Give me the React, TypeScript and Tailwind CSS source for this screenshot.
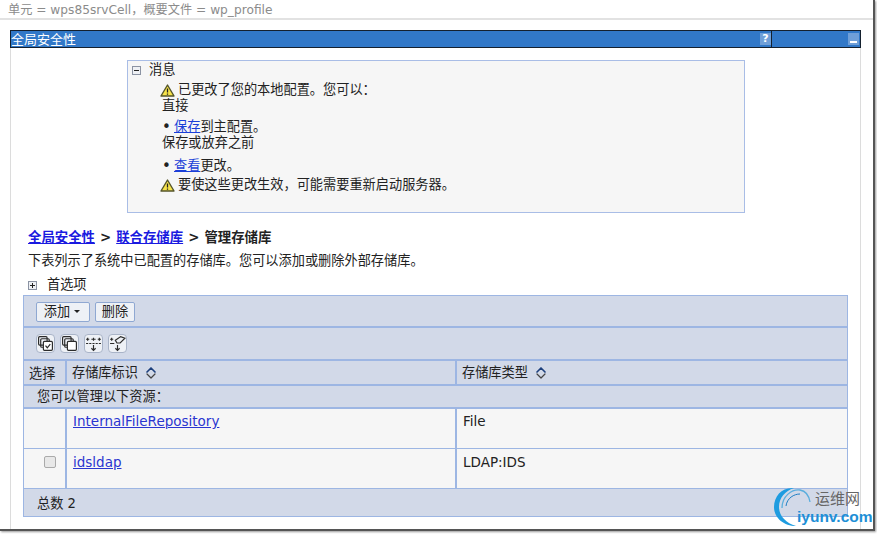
import { ChevronUp, ChevronDown } from "lucide-react";

const font = "font-['DejaVu_Sans','Noto_Sans_CJK_SC',sans-serif]";

function Warn() {
  return (
    <svg width="15" height="13" viewBox="0 0 15 13" className="shrink-0 -ml-[2px]">
      <path d="M7.5 1 L14 12 H1 Z" fill="#f7e34a" stroke="#55552a" strokeWidth="1.4" strokeLinejoin="round" />
      <path d="M7.5 4.5 V8.5 M7.5 9.6 V10.8" stroke="#222" strokeWidth="1.3" />
    </svg>
  );
}

function TreeBox({ plus }: { plus?: boolean }) {
  return (
    <svg width="9" height="9" viewBox="0 0 9 9" className="shrink-0">
      <rect x="0.5" y="0.5" width="8" height="8" fill="#eef0f4" stroke="#8b93a3" />
      <path d={plus ? "M2 4.5 H7 M4.5 2 V7" : "M2 4.5 H7"} stroke="#222" strokeWidth="1" />
    </svg>
  );
}

function Sort() {
  return (
    <span className="flex flex-col ml-[5px] -space-y-[10px]">
      <ChevronUp size={16} strokeWidth={2.5} className="text-[#1c3f7c]" />
      <ChevronDown size={16} strokeWidth={1.8} className="text-[#444]" />
    </span>
  );
}

function ToolIcon({ children }: { children: React.ReactNode }) {
  return (
    <span className="w-[19px] h-[19px] rounded-[4px] border border-[#a9b4c8] bg-[#eef1f6] flex items-center justify-center">
      <svg width="17" height="17" viewBox="0 0 16 16" fill="none" stroke="#2b2b2b" strokeWidth="1.1">
        {children}
      </svg>
    </span>
  );
}

export default function App() {
  return (
    <div className={`w-[877px] h-[534px] bg-white overflow-hidden relative text-[13.2px] leading-[16px] text-[#222] ${font}`}>
      <div className="w-[875px] h-[531px] border-r-2 border-b-2 border-[#555] shadow-[1px_1px_2px_#999]">
        <div className="h-[20px] pl-[8px] pt-[2px] border-b-2 border-[#e2e2e2] text-[12.2px] leading-[16px] text-[#8b8b8b]">
          单元 = wps85srvCell，概要文件 = wp_profile
        </div>

        <div className="ml-[10px] mt-[10px] w-[851px] h-[499px] border-x border-[#dcdcdc]">
          <div className="-mx-px h-[18px] flex border border-[#14202e] bg-[#3178c8] text-white text-[13px] leading-[17px]">
            <div className="flex-1 flex justify-between border-r border-[#14202e]">
              <span>全局安全性</span>
              <span className="w-[11px] h-[12px] mt-[2px] bg-[#6f9fd8] text-[11px] leading-[12px] font-bold text-center">?</span>
            </div>
            <div className="w-[88px] flex justify-end pr-[1px]">
              <span className="w-[11px] h-[12px] mt-[2px] bg-[#6f9fd8] flex items-end justify-center pb-[2px]">
                <span className="w-[7px] h-[2px] bg-white" />
              </span>
            </div>
          </div>

          <div className="ml-[116px] mt-[12px] w-[618px] h-[153px] border border-[#a9bde6] bg-[#f6f6f6] pl-[4px] pt-[1px]">
            <div className="flex items-center gap-[8px] h-[16px]">
              <TreeBox />
              <span>消息</span>
            </div>
            <div className="ml-[30px] mt-[4px]">
              <div className="flex items-center h-[16px] gap-[3px]"><Warn />已更改了您的本地配置。您可以：</div>
              <div className="h-[16px]">直接</div>
              <div className="flex items-center mt-[5px] h-[16px]">
                <span className="w-[12px] text-[15px]">•</span>
                <a className="text-[#1a3fd8] underline">保存</a>到主配置。
              </div>
              <div className="h-[16px]">保存或放弃之前</div>
              <div className="flex items-center mt-[7px] h-[16px]">
                <span className="w-[12px] text-[15px]">•</span>
                <a className="text-[#1a3fd8] underline">查看</a>更改。
              </div>
              <div className="flex items-center h-[16px] mt-[3px] gap-[3px]"><Warn />要使这些更改生效，可能需要重新启动服务器。</div>
            </div>
          </div>

          <div className="ml-[17px] mt-[16px] h-[18px] leading-[18px] font-bold text-[13.4px] flex gap-[5px]">
            <a className="text-[#1a1ae0] underline">全局安全性</a>
            <span>&gt;</span>
            <a className="text-[#1a1ae0] underline">联合存储库</a>
            <span>&gt;</span>
            <span>管理存储库</span>
          </div>
          <div className="ml-[17px] mt-[5px] h-[18px] leading-[18px]">下表列示了系统中已配置的存储库。您可以添加或删除外部存储库。</div>
          <div className="ml-[17px] mt-[7px] h-[16px] flex items-center gap-[10px]">
            <TreeBox plus />
            <span>首选项</span>
          </div>

          <div className="ml-[12px] mt-[2px] w-[825px] border border-[#9db6e3] bg-[#d2d9e8]">
            <div className="h-[32px] flex items-center gap-[5px] pl-[12px] pt-[1px] border-b-2 border-[#9db6e3]">
              <span className="w-[54px] h-[20px] flex items-center justify-center gap-[4px] pr-[2px] bg-[#eef1f6] border border-[#8fa8d2] rounded-[2px]">
                添加
                <span className="w-0 h-0 border-x-[3px] border-x-transparent border-t-[3px] border-t-[#222]" />
              </span>
              <span className="w-[40px] h-[20px] flex items-center justify-center bg-[#eef1f6] border border-[#8fa8d2] rounded-[2px]">删除</span>
            </div>
            <div className="h-[33px] flex items-center gap-[5px] pl-[12px] border-b-2 border-[#9db6e3]">
              <ToolIcon>
                <rect x="1.5" y="1.5" width="8" height="8" rx="1" />
                <rect x="3.5" y="3.5" width="8" height="8" rx="1" />
                <rect x="6" y="6" width="8.5" height="8.5" rx="1" fill="#fff" />
                <path d="M8 10 L9.7 12 L12.5 8.5" />
              </ToolIcon>
              <ToolIcon>
                <rect x="1.5" y="1.5" width="8" height="8" rx="1" />
                <rect x="3.5" y="3.5" width="8" height="8" rx="1" />
                <rect x="6" y="6" width="8.5" height="8.5" rx="1" fill="#fff" />
              </ToolIcon>
              <ToolIcon>
                <path d="M1 4 H4 M2.5 2.5 V5.5 M6 4 H10 M8 2.5 V5.5 M12 4 H15 M13.5 2.5 V5.5" />
                <path d="M1 8 H15" strokeDasharray="2 1" />
                <path d="M8 9.5 V14.5 M6 12.5 L8 14.5 L10 12.5" />
              </ToolIcon>
              <ToolIcon>
                <path d="M1 4 H4 M2.5 2.5 V5.5 M1 8 H5" />
                <path d="M6 5 L11 1.5 L15 3 L10.5 7.5 H7.5 Z" />
                <path d="M8 9.5 V14.5 M6 12.5 L8 14.5 L10 12.5" />
              </ToolIcon>
            </div>
            <div className="h-[25px] flex items-center border-b-2 border-[#9db6e3]">
              <div className="w-[43px] h-full border-r-2 border-[#9db6e3] pl-[5px] leading-[25px]">选择</div>
              <div className="w-[390px] h-full border-r-2 border-[#9db6e3] pl-[5px] pt-[1px] flex items-center">存储库标识<Sort /></div>
              <div className="flex-1 h-full pl-[5px] pt-[1px] flex items-center">存储库类型<Sort /></div>
            </div>
            <div className="h-[23px] pl-[13px] leading-[21px] border-b-2 border-[#9db6e3]">您可以管理以下资源：</div>
            <div className="h-[40px] flex bg-[#f6f6f6] border-b border-[#9db6e3] text-[13.5px] leading-[18px]">
              <div className="w-[43px] border-r-2 border-[#9db6e3]" />
              <div className="w-[390px] border-r-2 border-[#9db6e3] pl-[6px] pt-[3px]">
                <a className="text-[#2a35d0] underline">InternalFileRepository</a>
              </div>
              <div className="flex-1 pl-[6px] pt-[3px]">File</div>
            </div>
            <div className="h-[40px] flex bg-[#f6f6f6] border-b border-[#9db6e3] text-[13.5px] leading-[18px]">
              <div className="w-[43px] border-r-2 border-[#9db6e3] pl-[20px] pt-[7px]">
                <span className="block w-[12px] h-[12px] rounded-[2px] border border-[#aaa] bg-[#e8e8e8]" />
              </div>
              <div className="w-[390px] border-r-2 border-[#9db6e3] pl-[6px] pt-[4px]">
                <a className="text-[#2a35d0] underline">idsldap</a>
              </div>
              <div className="flex-1 pl-[6px] pt-[4px]">LDAP:IDS</div>
            </div>
            <div className="h-[27px] pl-[13px] leading-[29px]">总数 2</div>
          </div>
        </div>
      </div>

      {/* watermark */}
      <div className="absolute left-[772px] top-[486px] w-[105px] h-[46px]">
        <svg width="50" height="46" viewBox="0 0 50 46" fill="none" className="absolute left-0 top-0">
          <path d="M22 2 C10 1 2 10 2 21 C2 32 12 40 24 40 C14 37 7 30 7 21 C7 12 13 5 22 2 Z" fill="#1e9ce0" />
          <path d="M10 22 C10 10 20 3 28 4 C34 5 37 10 38 16" stroke="#5aaedd" strokeWidth="1.3" />
          <path d="M14 20 C15 12 22 8 28 8" stroke="#1e7fc4" strokeWidth="1" />
        </svg>
        <span className="absolute left-[43px] top-[3px] text-[15px] leading-[18px] text-[#666] font-['Noto_Sans_CJK_SC',sans-serif]">运维网</span>
        <span className="absolute left-[25px] top-[22px] text-[15.5px] leading-[18px] font-bold text-[#1e8fd6] font-['Liberation_Sans',sans-serif]">iyunv.com</span>
      </div>
    </div>
  );
}
